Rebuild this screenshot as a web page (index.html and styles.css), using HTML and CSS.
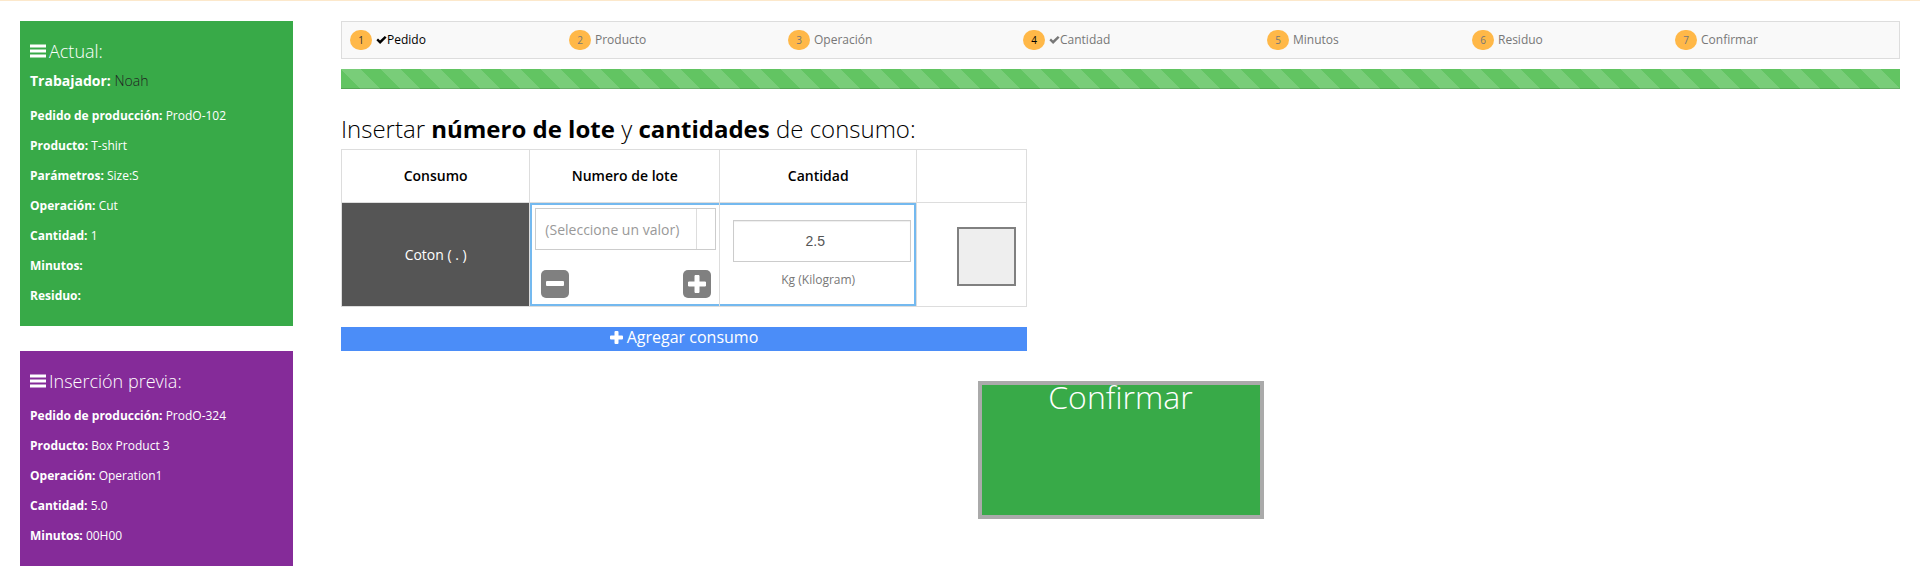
FILE: index.html
```html
<!DOCTYPE html>
<html lang="es">
<head>
<meta charset="utf-8">
<title>Consumo</title>
<link rel="stylesheet" href="styles.css">
</head>
<body>
<svg class="sprite" aria-hidden="true">
  <symbol id="bars" viewBox="0 0 16 14"><path d="M0 0.5h16v3H0zM0 5.5h16v3H0zM0 10.5h16v3H0z" fill="currentColor"/></symbol>
  <symbol id="check" viewBox="0 0 11 8"><path d="M0.4 4.2L2 2.6 4 4.6 8.8 0 10.6 1.6 4.1 8z" fill="currentColor"/></symbol>
  <symbol id="plus" viewBox="0 0 13 13"><path d="M4.5 1q0-1 1-1h2q1 0 1 1v3.5H12q1 0 1 1v2q0 1-1 1H8.500V12q0 1-1 1h-2q-1 0-1-1V8.500H1q-1 0-1-1v-2q0-1 1-1h3.500z" fill="currentColor"/></symbol>
</svg>
<div class="page">
  <aside class="sidebar">
    <section class="panel panel-current">
      <h2 class="panel-title"><svg class="icon-bars"><use href="#bars"/></svg>Actual:</h2>
      <p class="worker"><strong>Trabajador:</strong> <span class="worker-name">Noah</span></p>
      <ul class="facts">
        <li><strong>Pedido de producción:</strong> ProdO-102</li>
        <li><strong>Producto:</strong> T-shirt</li>
        <li><strong>Parámetros:</strong> Size:S</li>
        <li><strong>Operación:</strong> Cut</li>
        <li><strong>Cantidad:</strong> 1</li>
        <li><strong>Minutos:</strong></li>
        <li><strong>Residuo:</strong></li>
      </ul>
    </section>
    <section class="panel panel-previous">
      <h2 class="panel-title"><svg class="icon-bars"><use href="#bars"/></svg>Inserción previa:</h2>
      <ul class="facts">
        <li><strong>Pedido de producción:</strong> ProdO-324</li>
        <li><strong>Producto:</strong> Box Product 3</li>
        <li><strong>Operación:</strong> Operation1</li>
        <li><strong>Cantidad:</strong> 5.0</li>
        <li><strong>Minutos:</strong> 00H00</li>
      </ul>
    </section>
  </aside>
  <main class="main">
    <ol class="steps">
      <li class="step done"><span class="badge">1</span><svg class="icon-check"><use href="#check"/></svg>Pedido</li>
      <li class="step"><span class="badge">2</span>Producto</li>
      <li class="step"><span class="badge">3</span>Operación</li>
      <li class="step current"><span class="badge">4</span><svg class="icon-check"><use href="#check"/></svg>Cantidad</li>
      <li class="step"><span class="badge">5</span>Minutos</li>
      <li class="step"><span class="badge">6</span>Residuo</li>
      <li class="step"><span class="badge">7</span>Confirmar</li>
    </ol>
    <div class="progress"></div>
    <form class="form">
      <h1 class="heading">Insertar <strong>número de lote</strong> y <strong>cantidades</strong> de consumo:</h1>
      <div class="consumption">
        <table class="table">
          <colgroup><col class="col-item"><col class="col-lot"><col class="col-qty"><col class="col-pick"></colgroup>
          <thead>
            <tr><th>Consumo</th><th>Numero de lote</th><th>Cantidad</th><th></th></tr>
          </thead>
          <tbody>
            <tr>
              <td class="item">Coton ( . )</td>
              <td class="lot">
                <div class="combo">
                  <input class="combo-input" type="text" placeholder="(Seleccione un valor)" aria-label="Numero de lote">
                  <button class="combo-toggle" type="button" aria-label="Abrir lista"></button>
                </div>
                <div class="lot-actions">
                  <button class="square" type="button" aria-label="Quitar"><svg class="icon-square" viewBox="0 0 28 28"><rect x="5" y="11" width="18" height="5" rx="1" fill="#fff"/></svg></button>
                  <button class="square" type="button" aria-label="Añadir"><svg class="icon-square" viewBox="0 0 28 28"><path d="M5.500 12h6.500V5.500h4v6.500h6.500v4h-6.500v6.500h-4v-6.500H5.500z" fill="#fff" stroke="#fff" stroke-linejoin="round"/></svg></button>
                </div>
              </td>
              <td class="qty">
                <input class="qty-input" id="qty" type="text" value="2.5">
                <label class="unit" for="qty">Kg (Kilogram)</label>
              </td>
              <td class="pick"><input class="pick-box" type="checkbox" aria-label="Seleccionar consumo"></td>
            </tr>
          </tbody>
        </table>
        <button class="add" type="button"><svg class="icon-plus"><use href="#plus"/></svg>Agregar consumo</button>
      </div>
      <button class="confirm" type="button">Confirmar</button>
    </form>
  </main>
</div>
</body>
</html>
```
FILE: styles.css
```css
* { box-sizing: border-box; }

body {
  margin: 0;
  border-top: 1px solid #fce8cb;
  background: #fff;
  color: #000;
  font-family: "Open Sans", sans-serif;
  font-size: 14px;
}

button, input { font: inherit; margin: 0; border-radius: 0; }
button { border: 0; padding: 0; cursor: pointer; }
ul, ol { margin: 0; padding: 0; list-style: none; }
strong { font-weight: 700; }
.sprite { position: absolute; width: 0; height: 0; }

.page {
  display: grid;
  grid-template-columns: 273px 1fr;
  align-items: start;
  gap: 48px;
  padding: 20px 20px 0;
}

.sidebar { display: grid; gap: 25px; }
.panel { padding: 15px 10px; color: #fff; }
.panel-current { background: #38aa48; }
.panel-previous { background: #852b99; }

.panel-title {
  display: flex;
  align-items: center;
  gap: 3px;
  margin: 0 0 5px;
  font-size: 18px;
  font-weight: 300;
  line-height: 30px;
}

.icon-bars { width: 16px; height: 14px; }
.worker { margin: 0 0 10px; font-size: 14px; line-height: 20px; }
.worker-name { color: #222; font-weight: 300; }
.facts { font-size: 12px; line-height: 30px; }

.steps {
  display: grid;
  grid-template-columns: 219fr 219fr 235fr 244fr 205fr 203fr 216fr;
  padding: 8px;
  border: 1px solid #ddd;
  background: #f9f9f9;
  color: #777;
  font-size: 12px;
  line-height: 20px;
}

.step { display: flex; align-items: center; }
.done, .current .badge { color: #000; }

.badge {
  width: 22px;
  height: 20px;
  margin-right: 4px;
  border-radius: 10px;
  background: #ffb848;
  font-size: 10px;
  text-align: center;
}

.done .badge { color: #333; }
.icon-check { width: 11px; height: 8px; }

.progress {
  height: 20px;
  margin-top: 10px;
  background-color: #62c462;
  background-image: linear-gradient(45deg, rgba(255, 255, 255, .15) 25%, transparent 25%, transparent 50%, rgba(255, 255, 255, .15) 50%, rgba(255, 255, 255, .15) 75%, transparent 75%, transparent);
  background-size: 40px 40px;
  box-shadow: inset 0 -1px 0 rgba(0, 0, 0, .15);
}

.form { display: flex; flex-direction: column; align-items: flex-start; padding-top: 22px; }
.heading { margin: 0; padding-bottom: 2px; font-size: 24px; font-weight: 300; line-height: 36px; }
.consumption { width: 44%; }
.table { width: 100%; border-collapse: collapse; table-layout: fixed; }
.col-item { width: 27.5%; }
.col-lot { width: 27.7%; }
.col-qty { width: 28.8%; }
.col-pick { width: 16%; }
.table th, .table td { border: 1px solid #ddd; text-align: center; }
.table th { height: 53px; padding: 0 0 2px; font-weight: 600; }
.table td { height: 104px; }
.table .item { background: #555; color: #fff; }
.lot { padding: 5px 3px 3px; vertical-align: top; box-shadow: inset 2px 2px #74b9ef, inset 0 -2px #74b9ef; }
.qty { padding: 15px 5px 15px 13px; box-shadow: inset -2px -2px #74b9ef, inset 0 2px #74b9ef; }

.combo { display: flex; height: 42px; margin: 0 0 20px 2px; border: 1px solid #ccc; }
.combo-input { flex: 1; min-width: 0; padding: 0 0 0 9px; border: 0; outline: 0; background: none; }
.combo-input::placeholder { color: #999; opacity: 1; }
.combo-toggle { width: 19px; border-left: 1px solid #ddd; background: #fff; }
.lot-actions { display: flex; justify-content: space-between; padding: 0 5px 0 8px; }
.square { width: 28px; height: 28px; border-radius: 5px; background: #808080; }
.icon-square { display: block; width: 28px; height: 28px; }

.qty-input {
  display: block;
  width: 100%;
  height: 42px;
  padding: 0 14px 0 0;
  border: 1px solid #ccc;
  box-shadow: inset 0 1px 1px rgba(0, 0, 0, .07);
  color: #555;
  font-family: "Liberation Sans", sans-serif;
  text-align: center;
}

.unit { display: block; padding: 8px 8px 0 0; color: #777; font-size: 12px; line-height: 20px; }
.table .pick { padding: 4px 10px 0; text-align: right; }

.pick-box {
  width: 59px;
  height: 59px;
  border: 2px solid #808080;
  background: #eee;
  appearance: none;
  vertical-align: middle;
}

.add {
  display: flex;
  align-items: center;
  justify-content: center;
  gap: 4px;
  width: 100%;
  height: 24px;
  margin-top: 20px;
  padding-bottom: 4px;
  background: #4b8df8;
  color: #fff;
  font-size: 16px;
  line-height: 20px;
}

.icon-plus { width: 13px; height: 13px; }

.confirm {
  display: flex;
  justify-content: center;
  align-self: center;
  width: 286px;
  height: 138px;
  margin-top: 30px;
  border: 4px solid #aaa;
  background: #38aa48;
  color: #fff;
  font-size: 32px;
  font-weight: 300;
  line-height: 24px;
}
```
